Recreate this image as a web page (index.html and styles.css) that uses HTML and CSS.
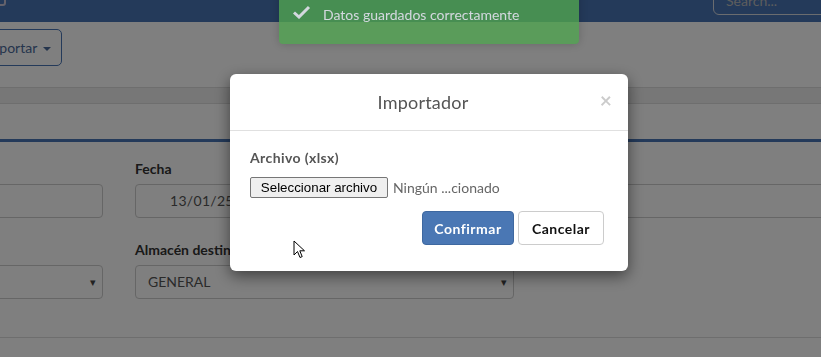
FILE: index.html
```html
<!DOCTYPE html>
<html lang="es">
<head>
  <meta charset="UTF-8" />
  <title>Traspasos - Importador</title>
  <link rel="stylesheet" href="styles.css">
</head>
<body>

<div class="page">
  <header class="navbar">
    <span class="brand-box"></span>
    <div class="search">Search...</div>
  </header>

  <div class="toolbar">
    <button type="button" class="btn-outline">Importar <span class="caret"></span></button>
  </div>

  <div class="band"></div>
  <div class="tabs"></div>

  <form class="entry">
    <div class="row row-top">
      <div class="field">
        <label>&nbsp;</label>
        <div class="input"></div>
      </div>
      <div class="field">
        <label>Fecha</label>
        <div class="input date">13/01/25</div>
      </div>
    </div>
    <div class="row row-bottom">
      <div class="field">
        <label>&nbsp;</label>
        <div class="select"><span></span><span class="arrow">&#9662;</span></div>
      </div>
      <div class="field">
        <label>Almacén destino</label>
        <div class="select"><span>GENERAL</span><span class="arrow">&#9662;</span></div>
      </div>
    </div>
  </form>
</div>

<div class="backdrop"></div>

<div class="toast">
  <svg class="toast-icon" width="19" height="14" viewBox="0 0 19 14">
    <polyline points="2,7.5 7,12 17,2" fill="none" stroke="#fff" stroke-width="3" />
  </svg>
  <span>Datos guardados correctamente</span>
</div>

<div class="modal">
  <div class="modal-header">
    <h4>Importador</h4>
    <span class="close">&times;</span>
  </div>
  <div class="modal-body">
    <div class="file-label">Archivo (xlsx)</div>
    <div class="file-row">
      <button type="button" class="file-btn">Seleccionar archivo</button>
      <span class="file-name">Ningún ...cionado</span>
    </div>
    <div class="actions">
      <button type="button" class="btn btn-primary">Confirmar</button>
      <button type="button" class="btn btn-default">Cancelar</button>
    </div>
  </div>
</div>

<svg class="cursor" width="13" height="20" viewBox="0 0 13 20">
  <path d="M1 1 L1 15 L4.5 11.5 L7 17.5 L9.2 16.6 L6.8 10.8 L11.5 10.8 Z" fill="#fff" stroke="#000" stroke-width="1" stroke-linejoin="miter" />
</svg>

</body>
</html>
```

FILE: styles.css
```css
body {
  margin: 0;
  font-family: Lato, "Open Sans", sans-serif;
  font-size: 14px;
  color: #333;
  background: #fff;
  overflow: hidden;
  height: 357px;
}
.page {
  margin-top: -28px;
}
.navbar {
  height: 50px;
  background: #4874b4;
  display: flex;
  justify-content: space-between;
  align-items: flex-start;
}
.brand-box {
  width: 20px;
  height: 20px;
  margin: 10px 0 0 -18px;
  border: 2px solid #c9c4d6;
  border-radius: 3px;
}
.search {
  width: 148px;
  height: 30px;
  margin-top: 13px;
  margin-right: -40px;
  box-sizing: border-box;
  border: 1px solid #d4d8de;
  border-radius: 6px;
  padding: 8px 12px;
  color: #bbb;
  font-size: 14px;
  line-height: 14px;
}
.toolbar {
  padding: 7px 0 21px;
}
.btn-outline {
  height: 37px;
  margin-left: -29px;
  padding: 0 10px 0 12px;
  font-family: inherit;
  font-size: 14px;
  color: #4a6a9a;
  background: #fff;
  border: 1px solid #4874b4;
  border-radius: 5px;
}
.caret {
  display: inline-block;
  margin-left: 2px;
  vertical-align: middle;
  border-top: 4px solid;
  border-left: 4px solid transparent;
  border-right: 4px solid transparent;
}
.band {
  height: 15px;
  background: #eee;
  border-top: 1px solid #dcdcdc;
  border-bottom: 1px solid #dcdcdc;
}
.tabs {
  height: 35px;
  border-bottom: 3px solid #4874b4;
}
.entry {
  padding: 17px 0 38px;
  margin-left: -17px;
  border-bottom: 1px solid #dcdcdc;
}
.row {
  display: grid;
  column-gap: 32px;
}
.row-top {
  grid-template-columns: 120px 800px;
  margin-bottom: 22px;
}
.row-bottom {
  grid-template-columns: 120px 379px;
}
.row-bottom label {
  margin-bottom: 4px;
}
.field label {
  display: block;
  font-weight: bold;
  line-height: 20px;
  margin-bottom: 5px;
  white-space: nowrap;
}
.input, .select {
  height: 34px;
  box-sizing: border-box;
  border: 1px solid #ccc;
  border-radius: 4px;
  line-height: 32px;
  color: #555;
}
.input.date {
  padding-left: 34px;
  letter-spacing: 0.3px;
}
.select {
  display: flex;
  justify-content: space-between;
  padding: 0 6px 0 12px;
}
.select .arrow {
  font-size: 11px;
  color: #444;
}
.backdrop {
  position: fixed;
  inset: 0;
  background: rgba(0, 0, 0, 0.5);
}
.toast {
  position: fixed;
  left: 279px;
  top: -12px;
  width: 300px;
  height: 56px;
  box-sizing: border-box;
  padding: 17px 15px 0 44px;
  background: #51a351;
  color: #fff;
  opacity: 0.8;
  border-radius: 0 0 4px 4px;
  box-shadow: 0 0 10px rgba(0, 0, 0, 0.25);
  line-height: 20px;
}
.toast-icon {
  position: absolute;
  left: 13px;
  top: 17px;
}
.modal {
  position: fixed;
  left: 230px;
  top: 74px;
  width: 398px;
  height: 197px;
  background: #fff;
  border-radius: 6px;
  box-shadow: 0 5px 15px rgba(0, 0, 0, 0.5);
}
.modal-header {
  height: 56px;
  padding-right: 12px;
  border-bottom: 1px solid #e0e0e0;
  display: flex;
  align-items: center;
  justify-content: center;
}
.modal-header h4 {
  margin: 0;
  font-size: 18px;
  font-weight: normal;
  letter-spacing: 0.2px;
  color: #555;
}
.close {
  position: absolute;
  right: 16px;
  top: 13px;
  font-size: 21px;
  font-weight: bold;
  color: #000;
  opacity: 0.2;
}
.modal-body {
  padding: 16px 24px 0 20px;
}
.file-label {
  font-weight: bold;
  font-size: 14px;
  letter-spacing: 0.4px;
  color: #555;
  line-height: 22px;
}
.file-row {
  margin-top: 8px;
  display: flex;
  align-items: center;
  gap: 5px;
}
.file-btn {
  height: 21px;
  width: 138px;
  padding: 0;
  font-family: "Liberation Sans", Arial, sans-serif;
  font-size: 13.33px;
  color: #000;
  background: #efefef;
  border: 1px solid #767676;
  border-radius: 2px;
}
.file-name {
  color: #666;
  font-size: 14px;
}
.actions {
  display: flex;
  justify-content: flex-end;
  gap: 4px;
  margin-top: 13px;
}
.btn {
  height: 34px;
  font-family: inherit;
  font-size: 14px;
  font-weight: bold;
  letter-spacing: 0.5px;
  border-radius: 4px;
}
.btn-primary {
  width: 92px;
  color: #fff;
  background: #4a77b4;
  border: 1px solid #3e68a0;
}
.btn-default {
  width: 86px;
  color: #111;
  background: #fff;
  border: 1px solid #ccc;
}
.cursor {
  position: fixed;
  left: 293px;
  top: 240px;
}
```
